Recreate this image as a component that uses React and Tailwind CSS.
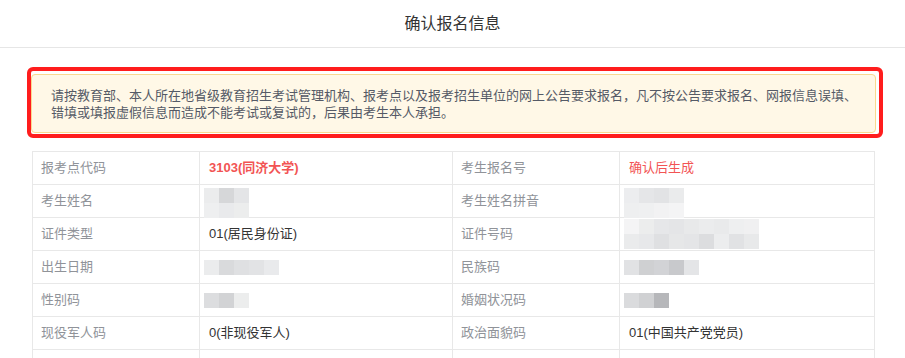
import React from "react";

const rows = [
  {
    l1: "报考点代码",
    v1: <span className="font-bold text-[#f25454]">3103(同济大学)</span>,
    l2: "考生报名号",
    v2: <span className="text-[#f25454]">确认后生成</span>,
  },
  {
    l1: "考生姓名",
    v1: <Mosaic className="mt-[4px]" cells={[["#ebeced", "#d6d7d9", "#e4e5e7"], ["#eeeff0", "#e9eaec", "#eceded"]]} />,
    l2: "考生姓名拼音",
    v2: <Mosaic className="mt-[4px]" cells={[["#ecedef", "#e5e6e8", "#e2e3e5", "#eaebec"], ["#eeeff0", "#eff0f1", "#f2f2f3", "#f4f4f5"]]} />,
  },
  {
    l1: "证件类型",
    v1: "01(居民身份证)",
    l2: "证件号码",
    v2: (
      <Mosaic
        className="mb-[1px] self-end"
        cells={[
          ["#f4f4f5", "#eceded", "#e6e7e9", "#e4e5e7", "#e8e9ea", "#ebeced", "#e9eaeb", "#eeeff0", "#f0f0f1"],
          ["#eaebec", "#e7e8ea", "#dfe0e2", "#e6e7e8", "#e4e5e7", "#dcdddf", "#ecedee", "#e1e2e4", "#e8e9ea"],
        ]}
      />
    ),
  },
  {
    l1: "出生日期",
    v1: <Mosaic cells={[["#ebeced", "#d9dadc", "#dfe0e2", "#e2e3e5", "#e9eaec"]]} />,
    l2: "民族码",
    v2: <Mosaic cells={[["#e1e2e4", "#cfd0d2", "#d2d3d6", "#c8c9cc", "#e4e5e7"]]} />,
  },
  {
    l1: "性别码",
    v1: <Mosaic cells={[["#dcdddf", "#d2d3d5", "#eceded"]]} />,
    l2: "婚姻状况码",
    v2: <Mosaic cells={[["#dadbdd", "#d0d1d3", "#b6b7ba"]]} />,
  },
  {
    l1: "现役军人码",
    v1: "0(非现役军人)",
    l2: "政治面貌码",
    v2: "01(中国共产党党员)",
  },
  { l1: "", v1: "", l2: "", v2: "" },
];

function Mosaic({ cells, className = "" }) {
  return (
    <div className={"flex flex-col -ml-[5px] blur-[0.5px] " + className}>
      {cells.map((row, i) => (
        <div key={i} className="flex">
          {row.map((c, j) => (
            <div key={j} className="w-[15px] h-[15px]" style={{ backgroundColor: c }} />
          ))}
        </div>
      ))}
    </div>
  );
}

export default function App() {
  return (
    <div
      className="w-[905px] h-[358px] overflow-hidden bg-white text-[13px]"
      style={{ fontFamily: '"Liberation Sans", "Noto Sans CJK SC", sans-serif' }}
    >
      <div className="h-[48px] border-b border-[#e6e6e6] flex items-center justify-center text-[16px] text-[#333]">
        确认报名信息
      </div>

      <div className="ml-[27px] mt-[19px] w-[856px] h-[71px] border-4 border-[#ff1d1d] rounded-[6px] pt-[3px]">
        <div className="w-[845px] h-[59px] bg-[#fff8e7] border border-[#fad98f] rounded-[4px] pl-[19px] pt-[12px] leading-[17px] text-[#555a66]">
          <p>请按教育部、本人所在地省级教育招生考试管理机构、报考点以及报考招生单位的网上公告要求报名，凡不按公告要求报名、网报信息误填、</p>
          <p>错填或填报虚假信息而造成不能考试或复试的，后果由考生本人承担。</p>
        </div>
      </div>

      <div className="ml-[32px] mt-[13px] w-[843px] border-l border-t border-[#e8e8e8] grid grid-cols-[167px_253px_167px_1fr]">
        {rows.map((r, i) => (
          <React.Fragment key={i}>
            <div className="h-[33px] border-r border-b border-[#e8e8e8] pl-[8px] flex items-center text-[#909399]">{r.l1}</div>
            <div className="h-[33px] border-r border-b border-[#e8e8e8] pl-[9px] flex items-center text-[#333]">{r.v1}</div>
            <div className="h-[33px] border-r border-b border-[#e8e8e8] pl-[8px] flex items-center text-[#909399]">{r.l2}</div>
            <div className="h-[33px] border-r border-b border-[#e8e8e8] pl-[9px] flex items-center text-[#333]">{r.v2}</div>
          </React.Fragment>
        ))}
      </div>
    </div>
  );
}
